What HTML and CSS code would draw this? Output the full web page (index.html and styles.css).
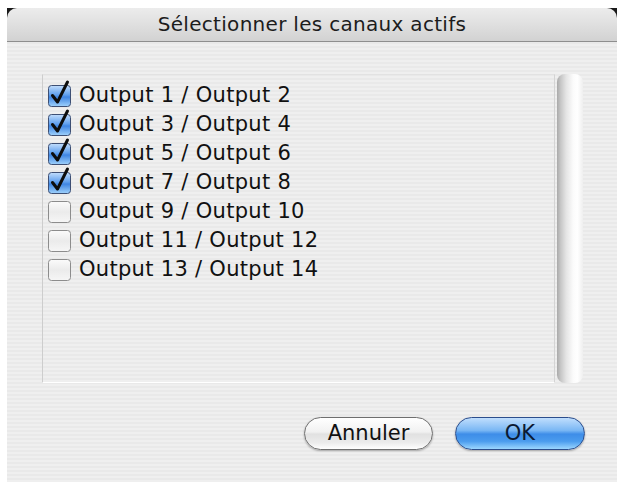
FILE: index.html
```html
<!DOCTYPE html>
<html lang="fr">
<head>
<meta charset="utf-8">
<title>Sélectionner les canaux actifs</title>
<link rel="stylesheet" href="styles.css">
</head>
<body>
<div class="window">
  <div class="titlebar">Sélectionner les canaux actifs</div>
  <div class="content">
    <div class="listwrap">
      <div class="list">
        <div class="row"><svg class="cb" viewBox="0 0 23 22"><rect class="box on" x="0.5" y="0.5" width="22" height="21" rx="3"/><path class="check" d="M4.5 10.5 L9.5 17 L19.5 -3"/></svg><span>Output 1 / Output 2</span></div>
        <div class="row"><svg class="cb" viewBox="0 0 23 22"><rect class="box on" x="0.5" y="0.5" width="22" height="21" rx="3"/><path class="check" d="M4.5 10.5 L9.5 17 L19.5 -3"/></svg><span>Output 3 / Output 4</span></div>
        <div class="row"><svg class="cb" viewBox="0 0 23 22"><rect class="box on" x="0.5" y="0.5" width="22" height="21" rx="3"/><path class="check" d="M4.5 10.5 L9.5 17 L19.5 -3"/></svg><span>Output 5 / Output 6</span></div>
        <div class="row"><svg class="cb" viewBox="0 0 23 22"><rect class="box on" x="0.5" y="0.5" width="22" height="21" rx="3"/><path class="check" d="M4.5 10.5 L9.5 17 L19.5 -3"/></svg><span>Output 7 / Output 8</span></div>
        <div class="row"><svg class="cb" viewBox="0 0 23 22"><rect class="box off" x="0.5" y="0.5" width="22" height="21" rx="3"/></svg><span>Output 9 / Output 10</span></div>
        <div class="row"><svg class="cb" viewBox="0 0 23 22"><rect class="box off" x="0.5" y="0.5" width="22" height="21" rx="3"/></svg><span>Output 11 / Output 12</span></div>
        <div class="row"><svg class="cb" viewBox="0 0 23 22"><rect class="box off" x="0.5" y="0.5" width="22" height="21" rx="3"/></svg><span>Output 13 / Output 14</span></div>
      </div>
      <div class="scroll"></div>
    </div>
    <div class="buttons">
      <button class="btn cancel">Annuler</button>
      <button class="btn ok">OK</button>
    </div>
  </div>
</div>
<svg width="0" height="0" class="defs">
  <defs>
    <linearGradient id="blue" x1="0" y1="0" x2="0" y2="1">
      <stop offset="0" stop-color="#c3defc"/>
      <stop offset="0.45" stop-color="#5f9fee"/>
      <stop offset="0.55" stop-color="#3f85e2"/>
      <stop offset="1" stop-color="#9fd2fc"/>
    </linearGradient>
    <linearGradient id="gray" x1="0" y1="0" x2="0" y2="1">
      <stop offset="0" stop-color="#fbfbfb"/>
      <stop offset="0.5" stop-color="#ebebeb"/>
      <stop offset="1" stop-color="#f6f6f6"/>
    </linearGradient>
  </defs>
</svg>
</body>
</html>
```
FILE: styles.css
```css
html, body {
  margin: 0;
  padding: 0;
  background: #ffffff;
}
body {
  font-family: "DejaVu Sans", "Liberation Sans", sans-serif;
  color: #111;
}
.defs {
  position: absolute;
}
.window {
  margin: 8px 0 0 7px;
  width: 610px;
  height: 474px;
  display: flex;
  flex-direction: column;
  background:
    linear-gradient(#1a1a1a, #1a1a1a) top / 100% 10px no-repeat,
    repeating-linear-gradient(to bottom, #efefef 0 2px, #e9e9e9 2px 4px);
}
.titlebar {
  height: 33px;
  line-height: 33px;
  text-align: center;
  font-size: 20px;
  letter-spacing: 0.3px;
  color: #1c1c1c;
  border-bottom: 1px solid #8e8e8e;
  border-radius: 10px 10px 0 0;
  background: linear-gradient(to bottom, #ececec 0%, #e2e2e2 40%, #d2d2d2 100%);
}
.content {
  flex: 1;
  display: flex;
  flex-direction: column;
  padding: 32px 32px 0 35px;
}
.listwrap {
  display: flex;
  height: 309px;
  width: 541px;
}
.list {
  width: 513px;
  box-sizing: border-box;
  border-left: 1px solid #cdcdcd;
  border-top: 1px solid #e2e2e2;
  border-right: 1px solid #d4d4d4;
  border-bottom: 1px solid #ffffff;
  padding: 6px 0 0 5px;
}
.row {
  display: flex;
  align-items: center;
  height: 29px;
  font-size: 21px;
  letter-spacing: 0.3px;
  line-height: 29px;
}
.cb {
  width: 23px;
  height: 22px;
  overflow: visible;
  margin-right: 8px;
  flex: none;
}
.box.on {
  fill: url(#blue);
  stroke: #3d4f74;
  stroke-width: 1;
}
.box.off {
  fill: url(#gray);
  stroke: #8c8c8c;
  stroke-width: 1;
}
.check {
  fill: none;
  stroke: #0d0d0d;
  stroke-width: 3;
  stroke-linejoin: round;
  stroke-linecap: round;
}
.scroll {
  width: 26px;
  margin-left: 2px;
  border-radius: 8px;
  background: linear-gradient(to right, #a9a9a9 0%, #c6c6c6 14%, #e4e4e4 35%, #fbfbfb 62%, #ffffff 78%, #efefef 100%);
}
.buttons {
  display: flex;
  justify-content: flex-end;
  gap: 22px;
  margin-top: 34px;
}
.btn {
  height: 33px;
  border-radius: 17px;
  font-family: "DejaVu Sans", "Liberation Sans", sans-serif;
  font-size: 21px;
  color: #111;
  padding: 0;
  line-height: 31px;
  box-shadow: 0 1px 2px rgba(0, 0, 0, 0.3);
}
.cancel {
  width: 129px;
  border: 1px solid #6f6f6f;
  background: linear-gradient(to bottom, #ffffff 0%, #f1f1f1 45%, #e1e1e1 52%, #ececec 80%, #ffffff 100%);
}
.ok {
  width: 130px;
  border: 1px solid #2b4d8c;
  color: #0b1a33;
  background: linear-gradient(to bottom, #c0defd 0%, #7ab7f4 40%, #3e8de8 52%, #4b9cee 75%, #9bd6ff 100%);
}
```
